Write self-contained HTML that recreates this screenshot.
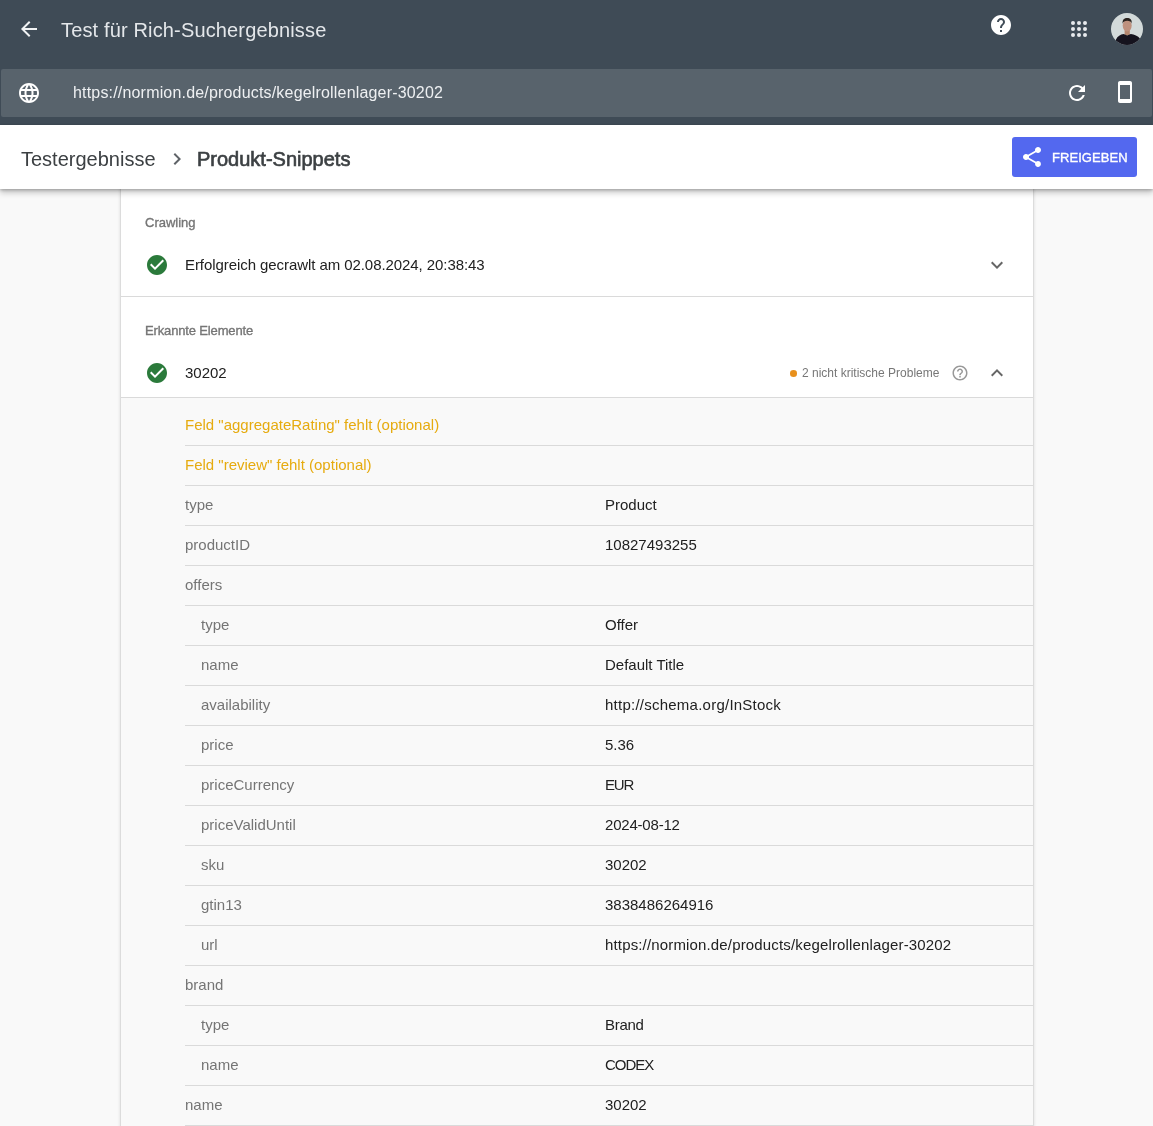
<!DOCTYPE html>
<html><head><meta charset="utf-8">
<style>
*{box-sizing:border-box;margin:0;padding:0}
html,body{width:1153px;height:1126px;overflow:hidden;background:#f9f9f9;font-family:"Liberation Sans",sans-serif}
.abs{position:absolute}
#top{position:absolute;left:0;top:0;width:1153px;height:125px;background:#3f4b56}
#urlbar{position:absolute;left:1px;top:69px;width:1151px;height:48px;background:#58636c;border-radius:2px}
.t{position:absolute;white-space:nowrap;line-height:1;will-change:transform}
#crumb{position:absolute;left:0;top:125px;width:1153px;height:64px;background:#fff;box-shadow:0 1px 3px rgba(0,0,0,.25),0 4px 6px rgba(0,0,0,.2);z-index:5}
#card{position:absolute;left:120px;top:150px;width:914px;height:1000px;background:#fff;border-left:1px solid #dcdcdc;border-right:1px solid #dcdcdc;box-shadow:0 0 3px rgba(0,0,0,.12)}
#grey{position:absolute;left:0;top:247px;width:912px;height:800px;background:#f9f9f9;border-top:1px solid #dadada}
.row{position:absolute;left:64px;width:848px;height:40px;border-bottom:1px solid #dadada}
.lab{will-change:transform;position:absolute;left:0;top:11px;font-size:15px;color:#757575;line-height:1;white-space:nowrap}
.ind{left:16px}
.val{will-change:transform;position:absolute;left:420px;top:11px;font-size:15px;color:#212121;line-height:1;white-space:nowrap}
.warn{will-change:transform;position:absolute;left:0;top:11px;font-size:15px;color:#e6ab0f;line-height:1;white-space:nowrap}
</style></head><body>
<div id="top">
  <svg class="abs" style="left:17px;top:17px" width="24" height="24" viewBox="0 0 24 24"><path fill="#f1f3f4" d="M20 11H7.83l5.59-5.59L12 4l-8 8 8 8 1.41-1.41L7.83 13H20v-2z"/></svg>
  <div class="t" style="left:61px;top:20px;font-size:20px;color:#e4e7ea;letter-spacing:0.15px">Test für Rich-Suchergebnisse</div>
  <svg class="abs" style="left:989px;top:13px" width="24" height="24" viewBox="0 0 24 24"><path fill="#fff" d="M12 2C6.48 2 2 6.48 2 12s4.48 10 10 10 10-4.48 10-10S17.52 2 12 2zm1 17h-2v-2h2v2zm2.07-7.75l-.9.92C13.45 12.9 13 13.5 13 15h-2v-.5c0-1.1.45-2.1 1.17-2.83l1.24-1.26c.37-.36.59-.86.59-1.41 0-1.1-.9-2-2-2s-2 .9-2 2H8c0-2.21 1.79-4 4-4s4 1.79 4 4c0 .88-.36 1.68-.93 2.25z"/></svg>
  <svg class="abs" style="left:1067px;top:17px" width="24" height="24" viewBox="0 0 24 24" fill="#e8eaed">
    <circle cx="6" cy="6" r="2"/><circle cx="12" cy="6" r="2"/><circle cx="18" cy="6" r="2"/>
    <circle cx="6" cy="12" r="2"/><circle cx="12" cy="12" r="2"/><circle cx="18" cy="12" r="2"/>
    <circle cx="6" cy="18" r="2"/><circle cx="12" cy="18" r="2"/><circle cx="18" cy="18" r="2"/>
  </svg>
  <svg class="abs" style="left:1111px;top:13px" width="32" height="32" viewBox="0 0 32 32">
    <defs><clipPath id="av"><circle cx="16" cy="16" r="16"/></clipPath></defs>
    <g clip-path="url(#av)">
      <rect width="32" height="32" fill="#d3dada"/>
      <rect x="13.6" y="16" width="5.2" height="6.5" fill="#b3866f"/>
      <ellipse cx="16.2" cy="12.6" rx="4.5" ry="5.8" fill="#be917e"/>
      <path d="M11.6 10.8 C11.2 6.4 13.3 4.9 16.2 4.9 C19.1 4.9 21.1 6.4 20.8 10.8 C20.3 8.4 18.6 7.7 16.2 7.7 C13.9 7.7 12.2 8.4 11.6 10.8Z" fill="#2b231f"/>
      <path d="M4 33 L5 26.5 C6.5 23 9.5 21.6 12.6 21 L16.2 22.6 L19.8 21 C23.2 21.6 27 23 29 25.5 L30 33 Z" fill="#15131e"/>
    </g>
  </svg>
  <div id="urlbar">
    <svg class="abs" style="left:16px;top:12px" width="24" height="24" viewBox="0 0 24 24"><path fill="#fff" d="M11.99 2C6.47 2 2 6.48 2 12s4.47 10 9.99 10C17.52 22 22 17.52 22 12S17.52 2 11.99 2zm6.93 6h-2.95c-.32-1.25-.78-2.45-1.38-3.56 1.84.63 3.37 1.91 4.33 3.56zM12 4.04c.83 1.2 1.48 2.53 1.91 3.96h-3.82c.43-1.43 1.08-2.76 1.91-3.96zM4.26 14C4.1 13.36 4 12.69 4 12s.1-1.36.26-2h3.38c-.08.66-.14 1.32-.14 2 0 .68.06 1.34.14 2H4.26zm.82 2h2.95c.32 1.25.78 2.45 1.38 3.56-1.84-.63-3.37-1.9-4.33-3.56zm2.95-8H5.08c.96-1.66 2.49-2.93 4.33-3.56C8.81 5.55 8.35 6.75 8.03 8zM12 19.96c-.83-1.2-1.48-2.53-1.91-3.96h3.82c-.43 1.43-1.08 2.76-1.91 3.96zM14.34 14H9.66c-.09-.66-.16-1.32-.16-2 0-.68.07-1.35.16-2h4.68c.09.65.16 1.32.16 2 0 .68-.07 1.34-.16 2zm.25 5.56c.6-1.11 1.06-2.31 1.38-3.56h2.95c-.96 1.65-2.49 2.93-4.33 3.56zM16.36 14c.08-.66.14-1.32.14-2 0-.68-.06-1.34-.14-2h3.38c.16.64.26 1.31.26 2s-.1 1.36-.26 2h-3.38z"/></svg>
    <div class="t" style="left:72px;top:16px;font-size:16px;color:#eef0f2;letter-spacing:0.18px">https://normion.de/products/kegelrollenlager-30202</div>
    <svg class="abs" style="left:1064px;top:12px" width="24" height="24" viewBox="0 0 24 24"><path fill="#fff" d="M17.65 6.35C16.2 4.9 14.21 4 12 4c-4.42 0-7.99 3.58-7.99 8s3.57 8 7.99 8c3.73 0 6.84-2.55 7.73-6h-2.08c-.82 2.33-3.04 4-5.65 4-3.31 0-6-2.69-6-6s2.69-6 6-6c1.66 0 3.14.69 4.22 1.78L13 11h7V4l-2.35 2.35z"/></svg>
    <svg class="abs" style="left:1112px;top:11px" width="24" height="24" viewBox="0 0 24 24"><path fill="#fff" d="M17 1.01L7 1c-1.1 0-1.99.9-1.99 2v18c0 1.1.89 2 1.99 2h10c1.1 0 2-.9 2-2V3c0-1.1-.9-1.99-2-1.99zM17 19H7V5h10v14z"/></svg>
  </div>
</div>
<div id="crumb">
  <div class="t" style="left:21px;top:24px;font-size:20px;color:#3c4043">Testergebnisse</div>
  <svg class="abs" style="left:165px;top:22px" width="24" height="24" viewBox="0 0 24 24"><path fill="#5f6368" d="M10 6L8.59 7.41 13.17 12l-4.58 4.59L10 18l6-6z"/></svg>
  <div class="t" style="left:197px;top:24px;font-size:20px;color:#3c4043;-webkit-text-stroke:0.65px #3c4043">Produkt-Snippets</div>
  <div class="abs" style="left:1012px;top:12px;width:125px;height:40px;background:#5368ef;border-radius:3px">
    <svg class="abs" style="left:8px;top:8px" width="24" height="24" viewBox="0 0 24 24"><path fill="#fff" d="M18 16.08c-.76 0-1.44.3-1.96.77L8.91 12.7c.05-.23.09-.46.09-.7s-.04-.47-.09-.7l7.05-4.11c.54.5 1.25.81 2.04.81 1.66 0 3-1.340 3-3s-1.34-3-3-3-3 1.34-3 3c0 .24.04.47.09.7L8.04 9.81C7.5 9.31 6.79 9 6 9c-1.66 0-3 1.34-3 3s1.34 3 3 3c.79 0 1.5-.31 2.04-.81l7.12 4.16c-.05.21-.08.43-.08.65 0 1.61 1.31 2.92 2.92 2.92 1.61 0 2.92-1.31 2.92-2.92s-1.31-2.92-2.92-2.92z"/></svg>
    <div class="t" style="left:40px;top:14px;font-size:13px;color:#fff;letter-spacing:0.05px;-webkit-text-stroke:0.35px #fff">FREIGEBEN</div>
  </div>
</div>
<div id="card">
  <div class="t" style="left:24px;top:66px;font-size:13px;color:#757575;-webkit-text-stroke:0.35px #757575">Crawling</div>
  <svg class="abs" style="left:24px;top:103px" width="24" height="24" viewBox="0 0 24 24"><path fill="#2b7a3b" d="M12 2C6.48 2 2 6.48 2 12s4.48 10 10 10 10-4.48 10-10S17.52 2 12 2zm-2 15l-5-5 1.41-1.41L10 14.17l7.59-7.59L19 8l-9 9z"/></svg>
  <div class="t" style="left:64px;top:107px;font-size:15px;color:#212121;letter-spacing:-0.07px">Erfolgreich gecrawlt am 02.08.2024, 20:38:43</div>
  <svg class="abs" style="left:864px;top:103px" width="24" height="24" viewBox="0 0 24 24"><path fill="#666" d="M16.59 8.59L12 13.17 7.41 8.59 6 10l6 6 6-6z"/></svg>
  <div class="abs" style="left:0;top:146px;width:912px;height:1px;background:#dadada"></div>
  <div class="t" style="left:24px;top:174px;font-size:13px;color:#757575;-webkit-text-stroke:0.35px #757575;letter-spacing:-0.15px">Erkannte Elemente</div>
  <svg class="abs" style="left:24px;top:211px" width="24" height="24" viewBox="0 0 24 24"><path fill="#2b7a3b" d="M12 2C6.48 2 2 6.48 2 12s4.48 10 10 10 10-4.48 10-10S17.52 2 12 2zm-2 15l-5-5 1.41-1.41L10 14.17l7.59-7.59L19 8l-9 9z"/></svg>
  <div class="t" style="left:64px;top:215px;font-size:15px;color:#212121">30202</div>
  <div class="abs" style="left:669px;top:220px;width:7px;height:6.5px;border-radius:50%;background:#e8901c"></div>
  <div class="t" style="left:681px;top:217px;font-size:12px;color:#777">2 nicht kritische Probleme</div>
  <svg class="abs" style="left:830px;top:214px" width="18" height="18" viewBox="0 0 24 24"><path fill="#999" d="M11 18h2v-2h-2v2zm1-16C6.48 2 2 6.48 2 12s4.48 10 10 10 10-4.48 10-10S17.52 2 12 2zm0 18c-4.41 0-8-3.59-8-8s3.59-8 8-8 8 3.59 8 8-3.59 8-8 8zm0-14c-2.21 0-4 1.79-4 4h2c0-1.1.9-2 2-2s2 .9 2 2c0 2-3 1.75-3 5h2c0-2.25 3-2.5 3-5 0-2.21-1.79-4-4-4z"/></svg>
  <svg class="abs" style="left:864px;top:211px" width="24" height="24" viewBox="0 0 24 24"><path fill="#666" d="M12 8l-6 6 1.41 1.41L12 10.83l4.59 4.58L18 14z"/></svg>
  <div id="grey"></div>
<!--rows-->
<div class="row" style="top:256px"><div class="warn">Feld &quot;aggregateRating&quot; fehlt (optional)</div></div>
<div class="row" style="top:296px"><div class="warn">Feld &quot;review&quot; fehlt (optional)</div></div>
<div class="row" style="top:336px"><div class="lab">type</div><div class="val">Product</div></div>
<div class="row" style="top:376px"><div class="lab">productID</div><div class="val">10827493255</div></div>
<div class="row" style="top:416px"><div class="lab">offers</div></div>
<div class="row" style="top:456px"><div class="lab ind">type</div><div class="val">Offer</div></div>
<div class="row" style="top:496px"><div class="lab ind">name</div><div class="val">Default Title</div></div>
<div class="row" style="top:536px"><div class="lab ind">availability</div><div class="val" style="letter-spacing:0.24px">http://schema.org/InStock</div></div>
<div class="row" style="top:576px"><div class="lab ind">price</div><div class="val">5.36</div></div>
<div class="row" style="top:616px"><div class="lab ind">priceCurrency</div><div class="val" style="letter-spacing:-1.2px">EUR</div></div>
<div class="row" style="top:656px"><div class="lab ind">priceValidUntil</div><div class="val" style="letter-spacing:-0.2px">2024-08-12</div></div>
<div class="row" style="top:696px"><div class="lab ind">sku</div><div class="val">30202</div></div>
<div class="row" style="top:736px"><div class="lab ind">gtin13</div><div class="val">3838486264916</div></div>
<div class="row" style="top:776px"><div class="lab ind">url</div><div class="val" style="letter-spacing:0.155px">https://normion.de/products/kegelrollenlager-30202</div></div>
<div class="row" style="top:816px"><div class="lab">brand</div></div>
<div class="row" style="top:856px"><div class="lab ind">type</div><div class="val" style="letter-spacing:-0.3px">Brand</div></div>
<div class="row" style="top:896px"><div class="lab ind">name</div><div class="val" style="letter-spacing:-1px">CODEX</div></div>
<div class="row" style="top:936px"><div class="lab">name</div><div class="val">30202</div></div>
<div class="row" style="top:976px"><div class="lab">image</div></div>
<!--rows-end-->
</div>
</body></html>
